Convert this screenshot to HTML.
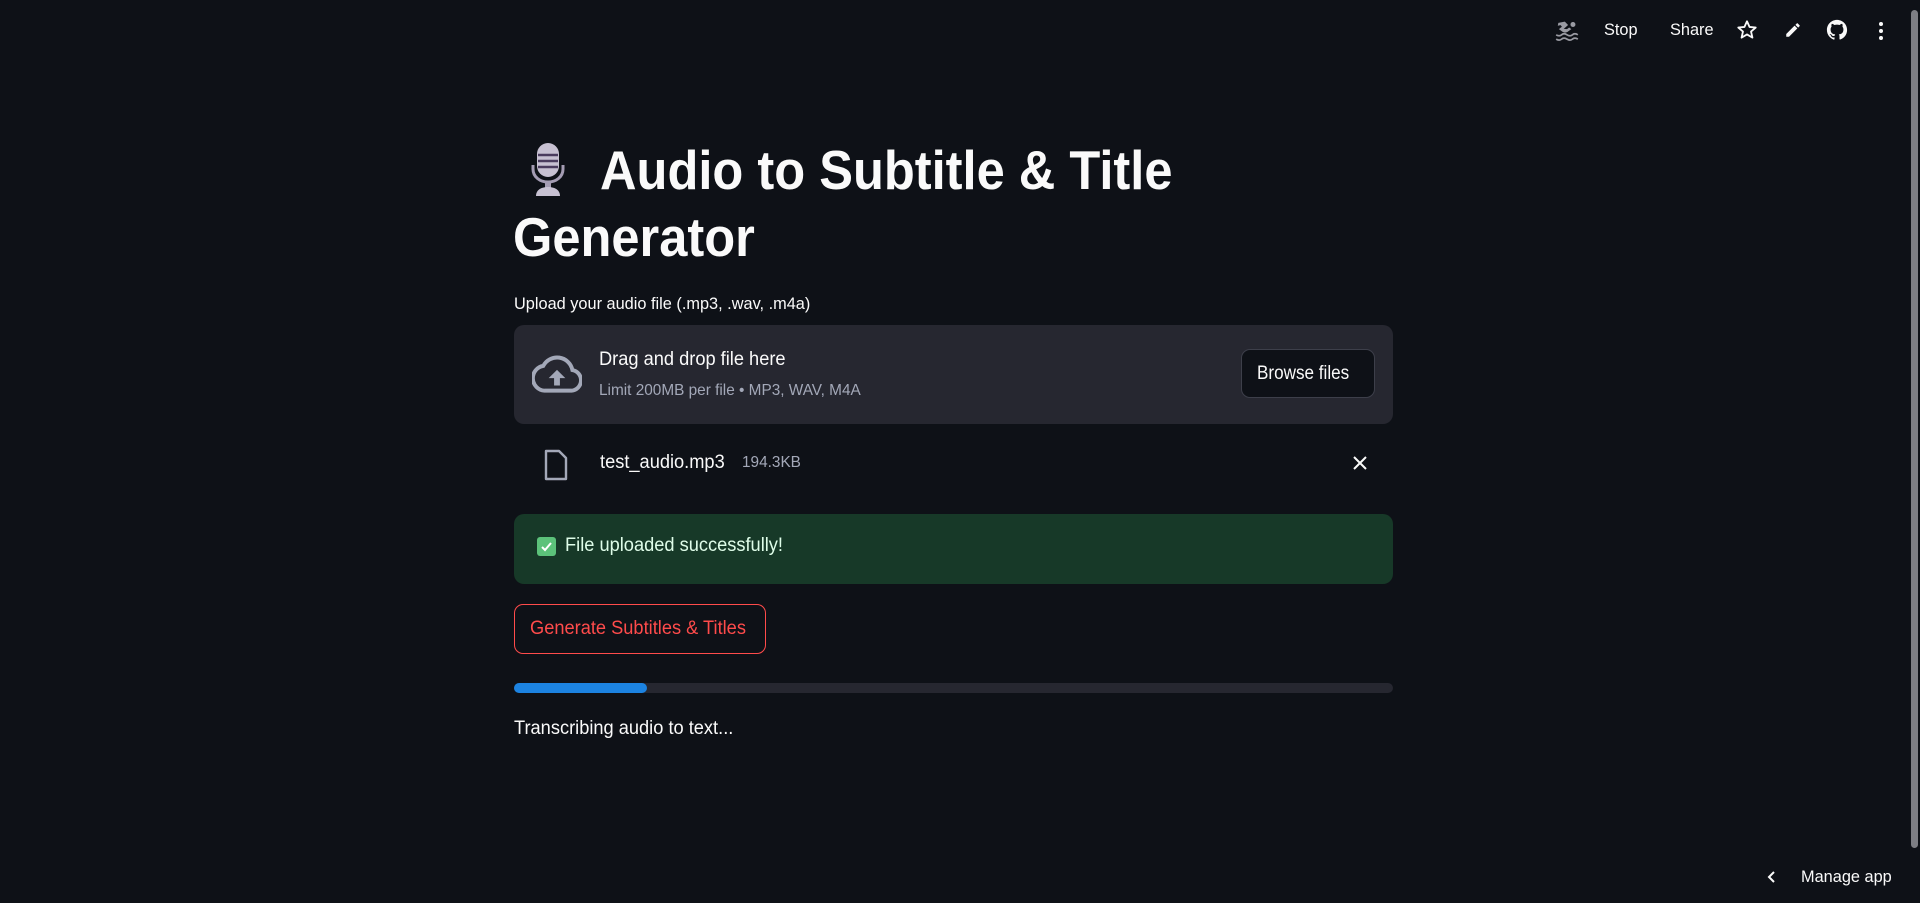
<!DOCTYPE html>
<html><head><meta charset="utf-8">
<style>
*{margin:0;padding:0;box-sizing:border-box}
html,body{width:1920px;height:903px;overflow:hidden;background:#0e1117;color:#fafafa;font-family:"Liberation Sans",sans-serif}
.a{position:absolute;white-space:nowrap}
.n{display:inline-block;transform:scaleX(0.96);transform-origin:left center}
</style></head><body>
<!-- top bar -->
<svg class="a" style="left:1553px;top:18px" width="28" height="26" viewBox="0 0 24 24" fill="#9a9ba3"><circle cx="17.5" cy="6" r="2.3"/><path d="M4 4.5l6 -1.2 3 3.2-4 3.5 3 .3 2-1.5 2 1.5-3.5 2.5c-1.5 .9-3 .9-4.5 0l-3.5-2.5 2.8-2.2-1.2-1.5-2.6.6z"/><path d="M2 15.5c2 1.3 3.5 1.3 5 0s3-1.3 5 0 3.5 1.3 5 0 3-1.3 5 0M2 19.5c2 1.3 3.5 1.3 5 0s3-1.3 5 0 3.5 1.3 5 0 3-1.3 5 0" stroke="#9a9ba3" stroke-width="1.6" fill="none"/></svg>
<div class="a" style="left:1604px;top:20px;font-size:17px"><span class="n">Stop</span></div>
<div class="a" style="left:1670px;top:20px;font-size:17px"><span class="n">Share</span></div>
<svg class="a" style="left:1736px;top:19px" width="22" height="22" viewBox="0 0 24 24" fill="none" stroke="#fafafa" stroke-width="2" stroke-linejoin="round"><path d="M12 2.5l2.8 6.2 6.7.6-5.1 4.4 1.5 6.6L12 16.8l-5.9 3.5 1.5-6.6-5.1-4.4 6.7-.6z"/></svg>
<svg class="a" style="left:1784px;top:21px" width="18" height="18" viewBox="0 0 24 24" fill="#fafafa"><path d="M3 17.3V21h3.7L17.8 9.9l-3.7-3.7zM20.7 7c.4-.4.4-1 0-1.4l-2.3-2.3c-.4-.4-1-.4-1.400 0l-1.8 1.8 3.7 3.7z"/></svg>
<svg class="a" style="left:1826px;top:19px" width="22" height="22" viewBox="0 0 24 24" fill="#fafafa"><path d="M12 1C5.9 1 1 5.9 1 12c0 4.9 3.2 9 7.5 10.5.6.1.8-.2.8-.5v-2c-3.1.7-3.7-1.4-3.700-1.4-.5-1.3-1.2-1.6-1.2-1.6-1-.7.1-.7.1-.7 1.1.1 1.7 1.1 1.7 1.1 1 1.7 2.6 1.2 3.2.9.1-.7.4-1.2.7-1.5-2.5-.3-5.1-1.2-5.1-5.5 0-1.2.4-2.2 1.1-3-.1-.3-.5-1.4.1-2.9 0 0 .9-.3 3 1.1.9-.2 1.8-.4 2.8-.4s1.9.1 2.8.4c2.1-1.4 3-1.1 3-1.1.6 1.5.2 2.6.1 2.9.7.8 1.1 1.8 1.1 3 0 4.3-2.6 5.2-5.1 5.5.4.3.8 1 .8 2v3c0 .3.2.6.8.5C19.8 21 23 16.9 23 12 23 5.9 18.1 1 12 1z"/></svg>
<svg class="a" style="left:1876px;top:19px" width="10" height="24" viewBox="0 0 10 24" fill="#fafafa"><circle cx="5" cy="5" r="2"/><circle cx="5" cy="12" r="2"/><circle cx="5" cy="19" r="2"/></svg>
<div class="a" style="left:1911px;top:10px;width:7px;height:838px;background:#7d7e84;border-radius:4px"></div>

<!-- title -->
<svg class="a" style="left:527px;top:141px" width="42" height="56" viewBox="0 0 34 56"><rect x="6" y="2" width="22" height="34" rx="11" fill="#c7c1d2"/><g stroke="#4a3c5e" stroke-width="2.4"><line x1="7" y1="14" x2="27" y2="14"/><line x1="7" y1="20" x2="27" y2="20"/><line x1="7" y1="26" x2="27" y2="26"/></g><path d="M2 24v4c0 8 7 13 15 13s15-5 15-13v-4" fill="none" stroke="#a49cb3" stroke-width="3"/><rect x="14" y="40" width="6" height="7" fill="#a49cb3"/><path d="M5 55c0-6 5-9 12-9s12 3 12 9z" fill="#c7c1d2"/></svg>
<div class="a" style="left:600px;top:140px;font-size:55px;font-weight:bold;line-height:60px"><span class="n" style="transform:scaleX(0.92)">Audio to Subtitle &amp; Title</span></div>
<div class="a" style="left:513px;top:207px;font-size:55px;font-weight:bold;line-height:60px"><span class="n" style="transform:scaleX(0.92)">Generator</span></div>

<div class="a" style="left:514px;top:294px;font-size:17px"><span class="n">Upload your audio file (.mp3, .wav, .m4a)</span></div>

<!-- dropzone -->
<div class="a" style="left:514px;top:325px;width:879px;height:99px;background:#262730;border-radius:10px"></div>
<svg class="a" style="left:532px;top:355px" width="50" height="38" viewBox="0 0 24 18"><path d="M19.4 7.1A7.5 7.5 0 0 0 5.4 5.1 6 6 0 0 0 6 17h13a5 5 0 0 0 .4-9.9z" fill="none" stroke="#a3a8b8" stroke-width="1.9"/><path d="M12 7l-4 4h2.6v3.5h2.8V11H16z" fill="#a3a8b8"/></svg>
<div class="a" style="left:599px;top:349px;font-size:19px"><span class="n">Drag and drop file here</span></div>
<div class="a" style="left:599px;top:382px;font-size:16px;color:#a3a8b8"><span class="n">Limit 200MB per file • MP3, WAV, M4A</span></div>
<div class="a" style="left:1241px;top:349px;width:134px;height:49px;border:1px solid #3d3f4a;border-radius:9px;background:#0e1117;font-size:19px;line-height:47px;text-align:center"><span class="n" style="transform:scaleX(0.9)">Browse files</span></div>

<!-- file row -->
<svg class="a" style="left:543px;top:449px" width="26" height="32" viewBox="0 0 26 32"><path d="M3 2h13l7 7v21H3z" fill="none" stroke="#a3a8b8" stroke-width="2.4" stroke-linejoin="round"/></svg>
<div class="a" style="left:600px;top:452px;font-size:19px"><span class="n">test_audio.mp3</span></div>
<div class="a" style="left:742px;top:454px;font-size:16px;color:#a3a8b8"><span class="n">194.3KB</span></div>
<svg class="a" style="left:1352px;top:455px" width="16" height="16" viewBox="0 0 16 16" stroke="#fafafa" stroke-width="2"><path d="M2 2l12 12M14 2L2 14"/></svg>

<!-- success -->
<div class="a" style="left:514px;top:514px;width:879px;height:70px;background:#173928;border-radius:10px"></div>
<div class="a" style="left:537px;top:537px;width:19px;height:19px;background:#5cc27a;border-radius:3px"></div>
<svg class="a" style="left:539px;top:539px" width="15" height="15" viewBox="0 0 15 15"><path d="M3 8l3 3 6-7" fill="none" stroke="#fff" stroke-width="2"/></svg>
<div class="a" style="left:565px;top:535px;font-size:19px;color:#dffde9"><span class="n">File uploaded successfully!</span></div>

<!-- button -->
<div class="a" style="left:514px;top:604px;width:252px;height:50px;border:1px solid #ff4b4b;border-radius:9px;color:#ff4b4b;font-size:19px;line-height:48px;padding-left:15px"><span class="n">Generate Subtitles &amp; Titles</span></div>

<!-- progress -->
<div class="a" style="left:514px;top:683px;width:879px;height:10px;background:#262730;border-radius:5px"></div>
<div class="a" style="left:514px;top:683px;width:133px;height:10px;background:#1c83e1;border-radius:5px"></div>

<div class="a" style="left:514px;top:718px;font-size:19px"><span class="n">Transcribing audio to text...</span></div>

<!-- manage app -->
<svg class="a" style="left:1766px;top:869px" width="12" height="16" viewBox="0 0 12 16"><path d="M8 3L3 8l5 5" fill="none" stroke="#fafafa" stroke-width="2"/></svg>
<div class="a" style="left:1801px;top:867px;font-size:17px"><span class="n">Manage app</span></div>
</body></html>
